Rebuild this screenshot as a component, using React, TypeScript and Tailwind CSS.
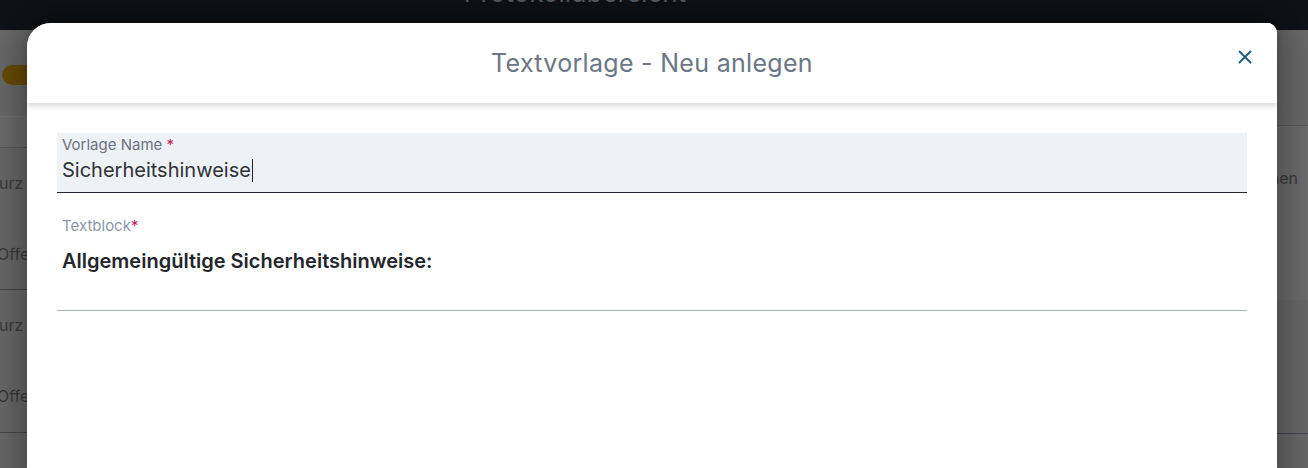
import { X } from "lucide-react";

const leftRows = [
  { text: "urz", h: "h-[70px]" },
  { text: "Offe", h: "h-[72px]" },
  { text: "urz", h: "h-[70px]" },
  { text: "Offe", h: "h-[73px]" },
];

export default function App() {
  return (
    <div className="relative h-[468px] w-[1308px] overflow-hidden bg-[#6d6d6d] font-['Inter',sans-serif]">
      {/* page behind the dialog */}
      <div className="flex h-[30px] justify-center overflow-hidden bg-[#0f1217]">
        <span className="-mt-[23px] pr-[158px] text-[26px] leading-[32px] text-[#5c6168]">Protokollübersicht</span>
      </div>
      <div className="flex justify-between">
        <div className="flex w-[60px] flex-col">
          <div className="h-[35px]" />
          <div className="ml-[2px] h-[20px] w-[50px] rounded-full bg-[#6b5000]" />
          <div className="h-[32px] border-b border-[#777]" />
          <div className="h-[31px] border-b border-[#5a5a5a] bg-[#707070]" />
          {leftRows.map((row, i) => (
            <div
              key={i}
              className={`flex items-center ${row.h} ${i % 2 === 1 ? "border-b border-[#4a4a4a]" : ""} text-[16px] text-[#3c3c3c]`}
            >
              <span className={i % 2 === 0 ? "-ml-[1px]" : "-ml-[3px]"}>{row.text}</span>
            </div>
          ))}
        </div>
        <div className="flex w-[60px] flex-col">
          <div className="h-[66px]" />
          <div className="h-[30px] border-b border-[#5c5c5c]" />
          <div className="flex h-[174px] flex-col items-end pr-[10px] bg-[#717171] text-[16px] text-[#3c3c3c]">
            <span className="mt-[6px] mr-[22px] text-[12px]">⌄</span>
            <span className="mt-[16px]">nen</span>
          </div>
          <div className="h-[134px] border-b border-[#454a52]" />
        </div>
      </div>

      {/* dialog */}
      <div className="absolute left-[27px] top-[23px] h-[480px] w-[1250px] rounded-tl-[24px] rounded-tr-[10px] bg-white shadow-[0_0_40px_12px_rgba(0,0,0,0.35)]">
        <div className="relative flex h-[80px] items-center justify-center rounded-tl-[24px] rounded-tr-[10px] bg-white shadow-[0_3px_6px_rgba(0,0,0,0.16)]">
          <h2 className="pt-[1px] text-[25px] tracking-[0.3px] text-[#6b7686]">Textvorlage - Neu anlegen</h2>
          <button className="absolute right-[21px] top-[23px] text-[#1d5f80]">
            <X size={22} strokeWidth={2.1} />
          </button>
        </div>

        <div className="px-[30px] pt-[30px]">
          <div className="flex h-[60px] flex-col border-b-[1.5px] border-[#23272e] bg-[#eef1f6] px-[5px] pt-[3px]">
            <label className="text-[15px] leading-[18px] text-[#6b7280]">
              Vorlage Name <span className="text-[#c2185b]">*</span>
            </label>
            <div className="mt-[4px] flex items-center text-[20px] leading-[25px] text-[#2f3237]">
              Sicherheitshinweise
              <span className="ml-[1px] h-[23px] w-[1px] bg-[#222]" />
            </div>
          </div>

          <div className="mt-[24px] flex h-[94px] flex-col border-b border-[#a9b4c2] px-[5px]">
            <label className="text-[15px] leading-[18px] text-[#8c97a8]">
              Textblock<span className="text-[#c2185b]">*</span>
            </label>
            <div className="mt-[14px] text-[20px] font-semibold leading-[25px] text-[#23262b]">
              Allgemeingültige Sicherheitshinweise:
            </div>
          </div>
        </div>
      </div>
    </div>
  );
}
